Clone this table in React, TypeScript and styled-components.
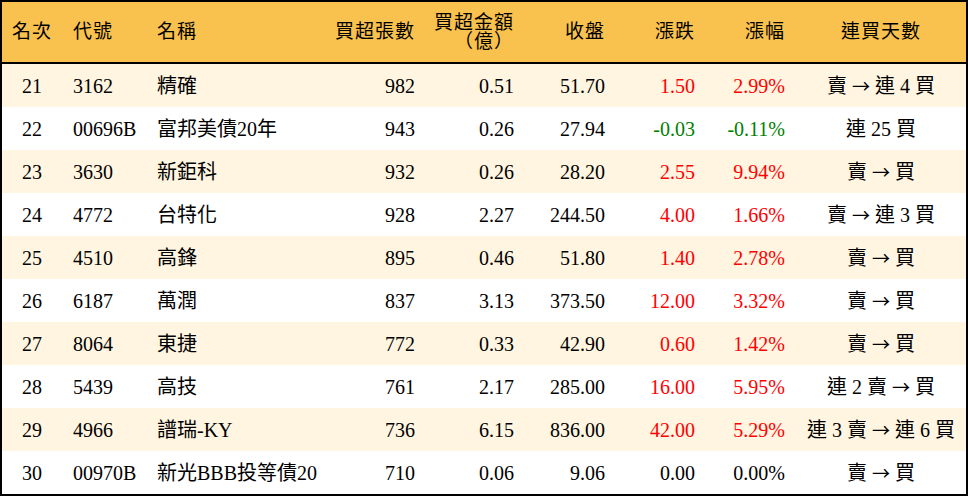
import styled, { createGlobalStyle } from "styled-components"

const GlobalStyle = createGlobalStyle`
    html, body {
        margin: 0;
        padding: 0;
        background: #ffffff;
    }
`

const columns = "60px 84px 180px 100px 99px 91px 90px 90px 170px"

const Board = styled.div`
    box-sizing: border-box;
    width: 968px;
    height: 496px;
    border: 2px solid #000;
    font-family: "Liberation Serif", "Noto Sans CJK TC", serif;
    font-size: 20px;
    color: #000;
    overflow: hidden;
`

const HeaderRow = styled.div`
    display: grid;
    grid-template-columns: ${columns};
    height: 60px;
    background-color: #f9c14e;
    border-bottom: 2px solid #000;
`

const Row = styled.div<{ shaded: boolean }>`
    display: grid;
    grid-template-columns: ${columns};
    height: 43px;
    background-color: ${props => props.shaded ? "#fff5e1" : "#ffffff"};
`

type Align = "left" | "right" | "center"

const Cell = styled.div<{ align: Align }>`
    display: flex;
    align-items: center;
    justify-content: ${props => props.align === "left" ? "flex-start" : props.align === "right" ? "flex-end" : "center"};
    text-align: ${props => props.align};
    padding: 0 11px;
    white-space: pre;
    line-height: 20px;
`

const HeadCell = styled(Cell)`
    font-size: 19px;
    letter-spacing: 1px;
`

const Value = styled.span<{ tone?: "up" | "down" }>`
    color: ${props => props.tone === "up" ? "#ff0000" : props.tone === "down" ? "#008000" : "#000"};
`

const HeadLines = styled.span`
    display: flex;
    flex-direction: column;
    align-items: flex-end;
    line-height: 19px;
`

const Arrow = styled.span`
    font-family: "Noto Sans CJK TC", sans-serif;
    font-size: 18px;
`

const aligns: Align[] = ["center", "left", "left", "right", "right", "right", "right", "right", "center"]

interface Stock {
    rank: number
    code: string
    name: string
    lots: number
    amount: string
    close: string
    change: string
    pct: string
    streak: string
}

const stocks: Stock[] = [
    { rank: 21, code: "3162", name: "精確", lots: 982, amount: "0.51", close: "51.70", change: "1.50", pct: "2.99%", streak: "賣 → 連 4 買" },
    { rank: 22, code: "00696B", name: "富邦美債20年", lots: 943, amount: "0.26", close: "27.94", change: "-0.03", pct: "-0.11%", streak: "連 25 買" },
    { rank: 23, code: "3630", name: "新鉅科", lots: 932, amount: "0.26", close: "28.20", change: "2.55", pct: "9.94%", streak: "賣 → 買" },
    { rank: 24, code: "4772", name: "台特化", lots: 928, amount: "2.27", close: "244.50", change: "4.00", pct: "1.66%", streak: "賣 → 連 3 買" },
    { rank: 25, code: "4510", name: "高鋒", lots: 895, amount: "0.46", close: "51.80", change: "1.40", pct: "2.78%", streak: "賣 → 買" },
    { rank: 26, code: "6187", name: "萬潤", lots: 837, amount: "3.13", close: "373.50", change: "12.00", pct: "3.32%", streak: "賣 → 買" },
    { rank: 27, code: "8064", name: "東捷", lots: 772, amount: "0.33", close: "42.90", change: "0.60", pct: "1.42%", streak: "賣 → 買" },
    { rank: 28, code: "5439", name: "高技", lots: 761, amount: "2.17", close: "285.00", change: "16.00", pct: "5.95%", streak: "連 2 賣 → 買" },
    { rank: 29, code: "4966", name: "譜瑞-KY", lots: 736, amount: "6.15", close: "836.00", change: "42.00", pct: "5.29%", streak: "連 3 賣 → 連 6 買" },
    { rank: 30, code: "00970B", name: "新光BBB投等債20", lots: 710, amount: "0.06", close: "9.06", change: "0.00", pct: "0.00%", streak: "賣 → 買" },
]

const toneOf = (change: string): "up" | "down" | undefined => {
    const n = parseFloat(change)
    if (n > 0) return "up"
    if (n < 0) return "down"
    return undefined
}

const Streak = ({ text }: { text: string }) => {
    const parts = text.split("→")
    return (
        <span>
            {parts.map((p, i) => (
                <span key={i}>
                    {i > 0 && <Arrow>→</Arrow>}
                    {p}
                </span>
            ))}
        </span>
    )
}

const App = () => {
    return (
        <>
            <GlobalStyle />
            <Board>
                <HeaderRow>
                    <HeadCell align={aligns[0]}>名次</HeadCell>
                    <HeadCell align={aligns[1]}>代號</HeadCell>
                    <HeadCell align={aligns[2]}>名稱</HeadCell>
                    <HeadCell align={aligns[3]}>買超張數</HeadCell>
                    <HeadCell align={aligns[4]}>
                        <HeadLines>
                            <span>買超金額</span>
                            <span>（億）</span>
                        </HeadLines>
                    </HeadCell>
                    <HeadCell align={aligns[5]}>收盤</HeadCell>
                    <HeadCell align={aligns[6]}>漲跌</HeadCell>
                    <HeadCell align={aligns[7]}>漲幅</HeadCell>
                    <HeadCell align={aligns[8]}>連買天數</HeadCell>
                </HeaderRow>
                {stocks.map((s, i) => {
                    const tone = toneOf(s.change)
                    return (
                        <Row shaded={i % 2 === 0} key={s.rank}>
                            <Cell align={aligns[0]}>{s.rank}</Cell>
                            <Cell align={aligns[1]}>{s.code}</Cell>
                            <Cell align={aligns[2]}>{s.name}</Cell>
                            <Cell align={aligns[3]}>{s.lots}</Cell>
                            <Cell align={aligns[4]}>{s.amount}</Cell>
                            <Cell align={aligns[5]}>{s.close}</Cell>
                            <Cell align={aligns[6]}><Value tone={tone}>{s.change}</Value></Cell>
                            <Cell align={aligns[7]}><Value tone={tone}>{s.pct}</Value></Cell>
                            <Cell align={aligns[8]}><Streak text={s.streak} /></Cell>
                        </Row>
                    )
                })}
            </Board>
        </>
    )
}

export default App
